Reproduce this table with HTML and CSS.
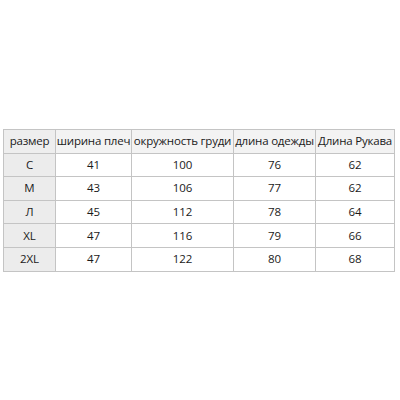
FILE: index.html
```html
<!DOCTYPE html>
<html>
<head>
<meta charset="utf-8">
<link rel="stylesheet" href="styles.css">
</head>
<body>
<div class="page">
<table class="sizes">
<colgroup>
<col class="c1"><col class="c2"><col class="c3"><col class="c4"><col class="c5">
</colgroup>
<thead>
<tr><th class="first">размер</th><th>ширина плеч</th><th>окружность груди</th><th>длина одежды</th><th>Длина Рукава</th></tr>
</thead>
<tbody>
<tr><td class="first">C</td><td>41</td><td>100</td><td>76</td><td>62</td></tr>
<tr><td class="first">M</td><td>43</td><td>106</td><td>77</td><td>62</td></tr>
<tr><td class="first">Л</td><td>45</td><td>112</td><td>78</td><td>64</td></tr>
<tr><td class="first">XL</td><td>47</td><td>116</td><td>79</td><td>66</td></tr>
<tr><td class="first">2XL</td><td>47</td><td>122</td><td>80</td><td>68</td></tr>
</tbody>
</table>
</div>
</body>
</html>
```
FILE: styles.css
```css
html, body {
  margin: 0;
  padding: 0;
  background: #ffffff;
}
.page {
  width: 400px;
  height: 400px;
  padding: 129px 0 0 3px;
  box-sizing: border-box;
}
.sizes {
  border-collapse: collapse;
  table-layout: fixed;
  width: 391px;
  border: 1px solid #9a9a9a;
  font-family: "Open Sans", "Noto Sans", sans-serif;
  font-size: 11.5px;
  color: #1a1a1a;
}
.c1 { width: 52px; }
.c2 { width: 76px; }
.c3 { width: 102px; }
.c4 { width: 82px; }
.c5 { width: 79px; }
.sizes th, .sizes td {
  border: 1px solid #c4c4c4;
  height: 22.6px;
  padding: 0;
  text-align: center;
  font-weight: normal;
  white-space: nowrap;
  overflow: hidden;
  line-height: 20px;
}
.sizes th {
  background: #f3f3f3;
  letter-spacing: -0.2px;
}
.sizes td.first {
  background: #ececec;
}
.sizes th.first {
  background: #eeeeee;
}
```
